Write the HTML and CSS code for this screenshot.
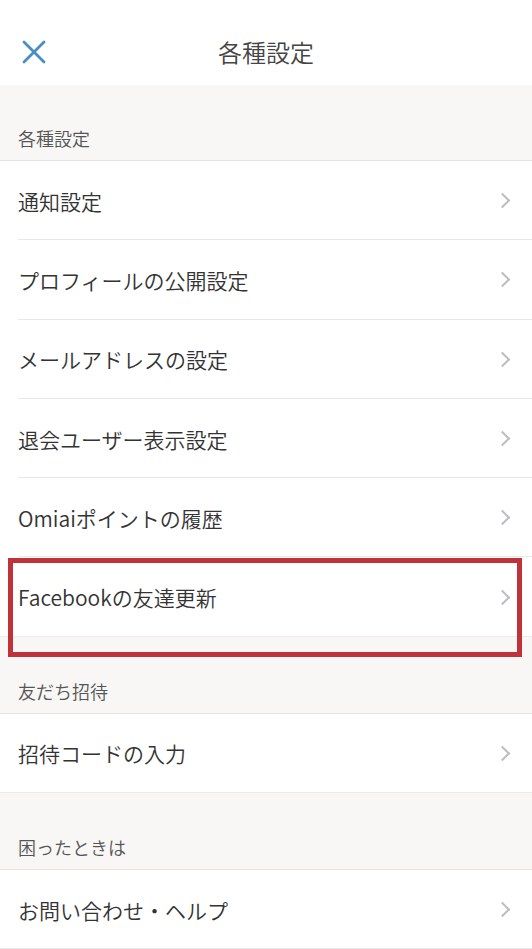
FILE: index.html
```html
<!DOCTYPE html>
<html lang="ja">
<head>
<meta charset="utf-8">
<link rel="stylesheet" href="styles.css">
</head>
<body>
<div class="screen">
  <header class="topbar">
    <svg class="close" width="24" height="24" viewBox="0 0 24 24"><path d="M2 2 L22 22 M22 2 L2 22" stroke="#4a8dc0" stroke-width="2.8" stroke-linecap="round"/></svg>
    <h1 class="title">各種設定</h1>
  </header>

  <div class="section-head first">各種設定</div>
  <ul class="group">
    <li class="row"><span>通知設定</span><i class="chev"></i></li>
    <li class="row"><span>プロフィールの公開設定</span><i class="chev"></i></li>
    <li class="row"><span>メールアドレスの設定</span><i class="chev"></i></li>
    <li class="row"><span>退会ユーザー表示設定</span><i class="chev"></i></li>
    <li class="row"><span>Omiaiポイントの履歴</span><i class="chev"></i></li>
    <li class="row highlight"><span>Facebookの友達更新</span><i class="chev"></i></li>
  </ul>

  <div class="section-head">友だち招待</div>
  <ul class="group">
    <li class="row"><span>招待コードの入力</span><i class="chev"></i></li>
  </ul>

  <div class="section-head">困ったときは</div>
  <ul class="group">
    <li class="row"><span>お問い合わせ・ヘルプ</span><i class="chev"></i></li>
  </ul>
</div>
</body>
</html>
```

FILE: styles.css
```css
* { box-sizing: border-box; }
html, body { margin: 0; padding: 0; }
body {
  width: 532px;
  height: 949px;
  overflow: hidden;
  background: #ffffff;
  font-family: "Noto Sans CJK JP", "Noto Sans", sans-serif;
  color: #333333;
}
.screen { width: 532px; }
.topbar {
  position: relative;
  height: 85px;
  display: flex;
  align-items: flex-start;
  justify-content: center;
  padding-top: 35px;
  background: #ffffff;
}
.close {
  position: absolute;
  left: 22px;
  top: 40px;
}
.title {
  margin: 0;
  font-size: 24px;
  line-height: 34px;
  font-weight: 350;
  color: #444444;
}
.section-head {
  height: 77px;
  background: #f8f7f5;
  border-bottom: 1px solid #e6e4e2;
  padding: 42px 0 0 18px;
  font-size: 18px;
  line-height: 24px;
  font-weight: 350;
  color: #555555;
}
.section-head.first { height: 76px; padding-top: 41px; }
.group {
  list-style: none;
  margin: 0;
  padding: 0;
}
.row {
  position: relative;
  height: 79.3px;
  display: flex;
  align-items: center;
  justify-content: space-between;
  padding: 0 22px 0 18px;
  font-size: 21px;
  font-weight: 350;
  color: #333333;
}
.row::after {
  content: "";
  position: absolute;
  left: 18px;
  right: 0;
  bottom: 0;
  height: 1px;
  background: #e8e8e8;
}
.row:last-child::after { left: 0; background: #ebebeb; }
.chev {
  width: 11px;
  height: 11px;
  border-top: 2px solid #bdbdc2;
  border-right: 2px solid #bdbdc2;
  transform: rotate(45deg);
  margin-right: 2px;
}
.highlight::before {
  content: "";
  position: absolute;
  left: 8px;
  right: 10px;
  top: 1px;
  height: 89px;
  border: 5px solid #c0323a;
  z-index: 2;
}
```
